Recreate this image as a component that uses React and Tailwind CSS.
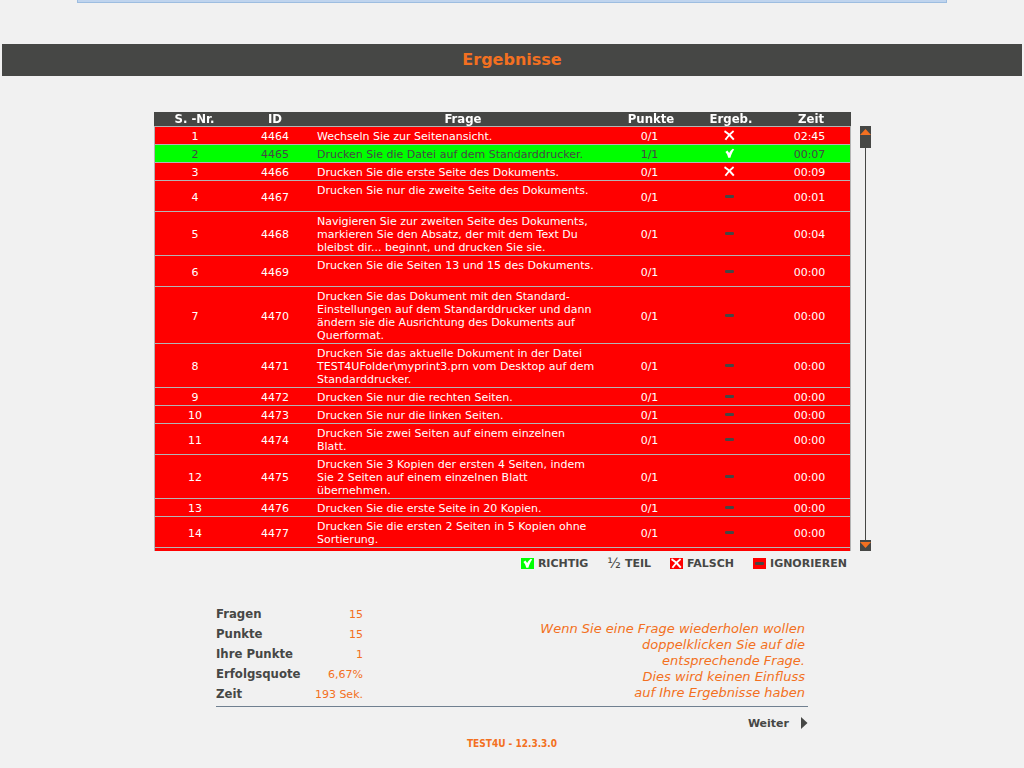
import React, { useRef } from 'react';

const results = [
  { nr: 1, id: 4464, question: 'Wechseln Sie zur Seitenansicht.', points: '0/1', status: 'wrong', time: '02:45' },
  { nr: 2, id: 4465, question: 'Drucken Sie die Datei auf dem Standarddrucker.', points: '1/1', status: 'right', time: '00:07' },
  { nr: 3, id: 4466, question: 'Drucken Sie die erste Seite des Dokuments.', points: '0/1', status: 'wrong', time: '00:09' },
  { nr: 4, id: 4467, question: 'Drucken Sie nur die zweite Seite des Dokuments.\n\u00a0', points: '0/1', status: 'ignored', time: '00:01' },
  { nr: 5, id: 4468, question: 'Navigieren Sie zur zweiten Seite des Dokuments,\nmarkieren Sie den Absatz, der mit dem Text Du\nbleibst dir... beginnt, und drucken Sie sie.', points: '0/1', status: 'ignored', time: '00:04' },
  { nr: 6, id: 4469, question: 'Drucken Sie die Seiten 13 und 15 des Dokuments.\n\u00a0', points: '0/1', status: 'ignored', time: '00:00' },
  { nr: 7, id: 4470, question: 'Drucken Sie das Dokument mit den Standard-\nEinstellungen auf dem Standarddrucker und dann\nändern sie die Ausrichtung des Dokuments auf\nQuerformat.', points: '0/1', status: 'ignored', time: '00:00' },
  { nr: 8, id: 4471, question: 'Drucken Sie das aktuelle Dokument in der Datei\nTEST4UFolder\\myprint3.prn vom Desktop auf dem\nStandarddrucker.', points: '0/1', status: 'ignored', time: '00:00' },
  { nr: 9, id: 4472, question: 'Drucken Sie nur die rechten Seiten.', points: '0/1', status: 'ignored', time: '00:00' },
  { nr: 10, id: 4473, question: 'Drucken Sie nur die linken Seiten.', points: '0/1', status: 'ignored', time: '00:00' },
  { nr: 11, id: 4474, question: 'Drucken Sie zwei Seiten auf einem einzelnen\nBlatt.', points: '0/1', status: 'ignored', time: '00:00' },
  { nr: 12, id: 4475, question: 'Drucken Sie 3 Kopien der ersten 4 Seiten, indem\nSie 2 Seiten auf einem einzelnen Blatt\nübernehmen.', points: '0/1', status: 'ignored', time: '00:00' },
  { nr: 13, id: 4476, question: 'Drucken Sie die erste Seite in 20 Kopien.', points: '0/1', status: 'ignored', time: '00:00' },
  { nr: 14, id: 4477, question: 'Drucken Sie die ersten 2 Seiten in 5 Kopien ohne\nSortierung.', points: '0/1', status: 'ignored', time: '00:00' },
];

const summary = [
  ['Fragen', '15'],
  ['Punkte', '15'],
  ['Ihre Punkte', '1'],
  ['Erfolgsquote', '6,67%'],
  ['Zeit', '193 Sek.'],
];

const StatusIcon = ({ status }) => (
  <svg viewBox="0 0 13 11" className="block w-[13px] h-[11px]" aria-hidden="true">
    {status === 'wrong' && (
      <path d="M1.5 1.2 C4 2.6 8 6 10.8 9.6 M10.6 1 C8 3 4.6 6.4 2.4 9.8" fill="none" stroke="#fff" strokeWidth="1.9" />
    )}
    {status === 'right' && (
      <path d="M2.4 4 L4.4 2.6 L6.2 5 C7 3.6 8.2 1.8 9.8 0.8 L11.2 1.4 C9.4 3.8 8.2 6.6 7.4 9.8 L5.2 9.8 C4.8 7.6 3.8 5.4 2.4 4 Z" fill="#fff" />
    )}
    {status === 'ignored' && <rect x="2" y="4" width="9" height="3" rx="1.3" fill="#464745" />}
  </svg>
);

const LegendItem = ({ icon, label }) => (
  <li className="flex items-center gap-1">
    {icon}
    <span>{label}</span>
  </li>
);

const App = () => {
  const bodyRef = useRef(null);
  const scroll = (amount) => bodyRef.current.scrollBy({ top: amount });

  return (
    <div className="min-h-screen bg-[#f1f1f1] text-[#464745] font-['DejaVu_Sans',sans-serif] text-[11px] leading-[13px]">
      <div className="max-w-[870px] h-[3px] mx-auto bg-[#bfd4ee] border border-t-0 border-[#9dbde0]" />

      <h1 className="mx-[2px] mt-[41px] h-8 bg-[#464745] text-[#f37021] text-center text-[16px] leading-8 font-bold">
        Ergebnisse
      </h1>

      <main className="max-w-[718px] mx-auto mt-9 pl-px">
        <div className="flex gap-[9px]">
          <div className="flex-1">
            <div ref={bodyRef} className="h-[439px] overflow-hidden">
              <table className="w-full table-fixed border-separate border-spacing-0 text-center">
                <colgroup>
                  <col className="w-[81px]" />
                  <col className="w-[80px]" />
                  <col />
                  <col className="w-[80px]" />
                  <col className="w-[80px]" />
                  <col className="w-[80px]" />
                </colgroup>
                <thead className="sticky top-0 bg-[#464745] text-white text-[13px] leading-[14px] font-['DejaVu_Sans_Condensed','DejaVu_Sans',sans-serif]">
                  <tr>
                    <th>S. -Nr.</th>
                    <th>ID</th>
                    <th>Frage</th>
                    <th>Punkte</th>
                    <th>Ergeb.</th>
                    <th>Zeit</th>
                  </tr>
                </thead>
                <tbody>
                  {results.map(r => (
                    <tr
                      key={r.id}
                      className={`[&>td]:border-t [&>td]:border-[#b4b4b4] [&>td]:pt-[3px] [&>td]:pb-px ${
                        r.status === 'right' ? 'bg-[#00ff00] text-[#464745]' : 'bg-[#ff0000] text-white'
                      }`}
                    >
                      <td className="border-l">{r.nr}</td>
                      <td>{r.id}</td>
                      <td className="pl-[2px] text-left whitespace-pre">{r.question}</td>
                      <td className="pr-[3px]">{r.points}</td>
                      <td className="pr-[3px]">
                        <div className="flex justify-center pb-[2px]"><StatusIcon status={r.status} /></div>
                      </td>
                      <td className="border-r pr-[2px]">{r.time}</td>
                    </tr>
                  ))}
                  <tr className="h-[18px] bg-[#ff0000]">
                    <td colSpan={6} className="border-t border-x border-[#b4b4b4]" />
                  </tr>
                </tbody>
              </table>
            </div>
          </div>

          <div className="w-[11px] mt-[14px] flex flex-col items-center">
            <button type="button" aria-label="Nach oben" onClick={() => scroll(-18)} className="w-full h-[11px] bg-[#464745]">
              <svg viewBox="0 0 11 11" className="block w-[11px] h-[11px]"><path d="M5.5 3 L11 9 H0 Z" fill="#f37021" /></svg>
            </button>
            <div className="w-full h-[11px] bg-[#464745]" />
            <div className="w-px flex-1 bg-[#464745]" />
            <button type="button" aria-label="Nach unten" onClick={() => scroll(18)} className="w-full h-[11px] bg-[#464745]">
              <svg viewBox="0 0 11 11" className="block w-[11px] h-[11px]"><path d="M0 2 H11 L5.5 8 Z" fill="#f37021" /></svg>
            </button>
          </div>
        </div>

        <ul className="mt-1 mr-6 h-4 flex justify-end items-center gap-[19px] font-bold">
          <LegendItem icon={<span className="bg-[#00ff00]"><StatusIcon status="right" /></span>} label="RICHTIG" />
          <LegendItem icon={<span className="text-[14px] font-normal">½</span>} label="TEIL" />
          <LegendItem icon={<span className="bg-[#ff0000]"><StatusIcon status="wrong" /></span>} label="FALSCH" />
          <LegendItem icon={<span className="bg-[#ff0000]"><StatusIcon status="ignored" /></span>} label="IGNORIEREN" />
        </ul>
      </main>

      <section className="max-w-[592px] mx-auto mt-8">
        <div className="flex justify-between items-end pb-[2px] border-b border-[#708090]">
          <dl className="w-[147px] pb-px">
            {summary.map(([label, value]) => (
              <div key={label} className="flex justify-between items-center h-5">
                <dt className="text-[13px] font-bold font-['DejaVu_Sans_Condensed','DejaVu_Sans',sans-serif]">{label}</dt>
                <dd className="pt-[2px] text-[#f37021]">{value}</dd>
              </div>
            ))}
          </dl>
          <p className="pr-[3px] pb-[3px] text-right text-[13px] leading-4 italic text-[#f37021]">
            Wenn Sie eine Frage wiederholen wollen<br />
            doppelklicken Sie auf die<br />
            entsprechende Frage.<br />
            Dies wird keinen Einfluss<br />
            auf Ihre Ergebnisse haben
          </p>
        </div>
        <div className="flex justify-end mt-2">
          <button type="button" className="flex items-center gap-3 h-4 font-bold">
            Weiter
            <svg viewBox="0 0 7 12" className="w-[7px] h-3" aria-hidden="true"><path d="M0 0 L6.5 6 L0 12 Z" fill="#464745" /></svg>
          </button>
        </div>
      </section>

      <footer className="mt-[6px] text-center text-[10px] font-bold text-[#f37021] font-['DejaVu_Sans_Condensed','DejaVu_Sans',sans-serif]">
        TEST4U - 12.3.3.0
      </footer>
    </div>
  );
};

export default App;
